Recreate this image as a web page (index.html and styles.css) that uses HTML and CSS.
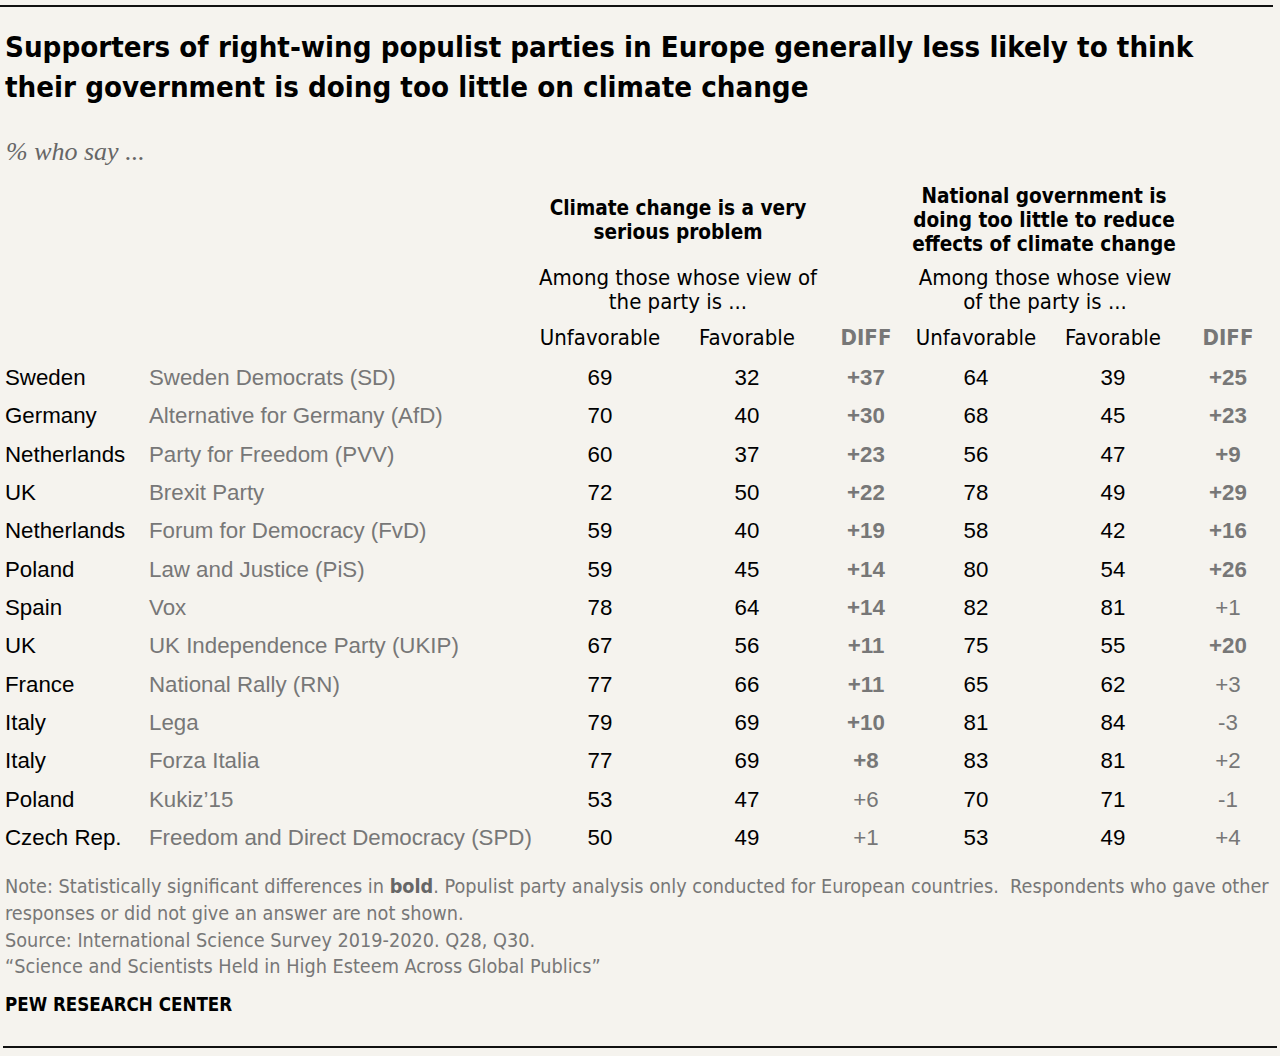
FILE: index.html
```html
<!DOCTYPE html>
<html lang="en">
<head>
<meta charset="utf-8">
<title>Supporters of right-wing populist parties</title>
<link rel="stylesheet" href="styles.css">
</head>
<body>
<div class="page">
  <div class="rule-top"></div>
  <h1 class="title">Supporters of right-wing populist parties in Europe generally less likely to think<br>their government is doing too little on climate change</h1>
  <p class="subtitle">% who say ...</p>

  <div class="thead">
    <div class="group g1">Climate change is a very<br>serious problem</div>
    <div class="group g2">National government is<br>doing too little to reduce<br>effects of climate change</div>

    <div class="among a1">Among those whose view of<br>the party is ...</div>
    <div class="among a2">Among those whose view<br>of the party is ...</div>

    <div class="colhead c3">Unfavorable</div>
    <div class="colhead c4">Favorable</div>
    <div class="colhead c5 diffhead">DIFF</div>
    <div class="colhead c6">Unfavorable</div>
    <div class="colhead c7">Favorable</div>
    <div class="colhead c8 diffhead">DIFF</div>
  </div>

  <div class="tbody">
    <div class="country">Sweden</div><div class="party">Sweden Democrats (SD)</div><div class="num">69</div><div class="num">32</div><div class="diff sig">+37</div><div class="num">64</div><div class="num">39</div><div class="diff sig">+25</div>
    <div class="country">Germany</div><div class="party">Alternative for Germany (AfD)</div><div class="num">70</div><div class="num">40</div><div class="diff sig">+30</div><div class="num">68</div><div class="num">45</div><div class="diff sig">+23</div>
    <div class="country">Netherlands</div><div class="party">Party for Freedom (PVV)</div><div class="num">60</div><div class="num">37</div><div class="diff sig">+23</div><div class="num">56</div><div class="num">47</div><div class="diff sig">+9</div>
    <div class="country">UK</div><div class="party">Brexit Party</div><div class="num">72</div><div class="num">50</div><div class="diff sig">+22</div><div class="num">78</div><div class="num">49</div><div class="diff sig">+29</div>
    <div class="country">Netherlands</div><div class="party">Forum for Democracy (FvD)</div><div class="num">59</div><div class="num">40</div><div class="diff sig">+19</div><div class="num">58</div><div class="num">42</div><div class="diff sig">+16</div>
    <div class="country">Poland</div><div class="party">Law and Justice (PiS)</div><div class="num">59</div><div class="num">45</div><div class="diff sig">+14</div><div class="num">80</div><div class="num">54</div><div class="diff sig">+26</div>
    <div class="country">Spain</div><div class="party">Vox</div><div class="num">78</div><div class="num">64</div><div class="diff sig">+14</div><div class="num">82</div><div class="num">81</div><div class="diff">+1</div>
    <div class="country">UK</div><div class="party">UK Independence Party (UKIP)</div><div class="num">67</div><div class="num">56</div><div class="diff sig">+11</div><div class="num">75</div><div class="num">55</div><div class="diff sig">+20</div>
    <div class="country">France</div><div class="party">National Rally (RN)</div><div class="num">77</div><div class="num">66</div><div class="diff sig">+11</div><div class="num">65</div><div class="num">62</div><div class="diff">+3</div>
    <div class="country">Italy</div><div class="party">Lega</div><div class="num">79</div><div class="num">69</div><div class="diff sig">+10</div><div class="num">81</div><div class="num">84</div><div class="diff">-3</div>
    <div class="country">Italy</div><div class="party">Forza Italia</div><div class="num">77</div><div class="num">69</div><div class="diff sig">+8</div><div class="num">83</div><div class="num">81</div><div class="diff">+2</div>
    <div class="country">Poland</div><div class="party">Kukiz’15</div><div class="num">53</div><div class="num">47</div><div class="diff">+6</div><div class="num">70</div><div class="num">71</div><div class="diff">-1</div>
    <div class="country">Czech Rep.</div><div class="party">Freedom and Direct Democracy (SPD)</div><div class="num">50</div><div class="num">49</div><div class="diff">+1</div><div class="num">53</div><div class="num">49</div><div class="diff">+4</div>
  </div>

  <div class="notes">
    <p>Note: Statistically significant differences in <b>bold</b>. Populist party analysis only conducted for European countries.&nbsp; Respondents who gave other responses or did not give an answer are not shown.</p>
    <p>Source: International Science Survey 2019-2020. Q28, Q30.</p>
    <p>“Science and Scientists Held in High Esteem Across Global Publics”</p>
  </div>
  <div class="brand">PEW RESEARCH CENTER</div>
  <div class="rule-bottom"></div>
</div>
</body>
</html>
```

FILE: styles.css
```css
html, body {
  margin: 0;
  padding: 0;
  background: #f5f3ee;
}

.page {
  width: 1280px;
  height: 1056px;
  box-sizing: border-box;
  padding-top: 5px;
  position: relative;
  color: #000;
  font-family: "Liberation Sans", Arial, sans-serif;
}

.rule-top {
  height: 2px;
  background: #111;
  margin-right: 7px;
}

.title {
  margin: 20px 0 0 5px;
  font-family: "Liberation Sans Narrow", "DejaVu Sans Condensed", sans-serif;
  font-weight: 700;
  font-size: 29.2px;
  line-height: 40px;
  color: #000;
  white-space: nowrap;
}

.subtitle {
  margin: 30px 0 0 6px;
  font-family: "Liberation Serif", Georgia, serif;
  font-style: italic;
  font-size: 26px;
  line-height: 30px;
  color: #666;
}

.thead,
.tbody {
  margin-left: 5px;
  display: grid;
  grid-template-columns: 144px 387px 128px 166px 72px 148px 126px 104px;
}

.thead {
  margin-top: 17px;
  grid-template-rows: 72px 58px 36px;
  align-items: center;
}

.tbody {
  margin-top: 9px;
  grid-auto-rows: 38.33px;
  align-items: center;
}

.group, .among, .colhead {
  font-family: "Liberation Sans Narrow", "DejaVu Sans Condensed", sans-serif;
  text-align: center;
  line-height: 24px;
  white-space: nowrap;
}

.group {
  grid-row: 1;
  font-weight: 700;
  font-size: 20.6px;
}

.g1 { grid-column: 3 / 5; padding-right: 10px; }
.g2 { grid-column: 6 / 8; padding-left: 10px; }

.among {
  grid-row: 2;
  font-size: 22px;
  align-self: end;
}
.a1 { grid-column: 3 / 5; padding-right: 10px; }
.a2 { grid-column: 6 / 8; padding-left: 12px; }

.colhead {
  grid-row: 3;
  font-size: 22px;
  align-self: end;
}
.c3 { grid-column: 3; }
.c4 { grid-column: 4; }
.c5 { grid-column: 5; }
.c6 { grid-column: 6; }
.c7 { grid-column: 7; }
.c8 { grid-column: 8; }

.diffhead {
  font-weight: 700;
  color: #777;
}

.country, .party, .num, .diff {
  font-size: 22.3px;
  line-height: 38px;
  white-space: nowrap;
}

.party { color: #777; }

.num, .diff { text-align: center; }

.diff { color: #777; }
.diff.sig { font-weight: 700; }

.notes {
  margin: 17px 0 0 5px;
  font-family: "Liberation Sans Narrow", "DejaVu Sans Condensed", sans-serif;
  font-size: 19.7px;
  line-height: 26.7px;
  color: #777;
}
.notes p { margin: 0; }
.notes b { color: #666; }

.brand {
  margin: 11px 0 0 5px;
  font-family: "Liberation Sans Narrow", "DejaVu Sans Condensed", sans-serif;
  font-weight: 700;
  font-size: 18.6px;
  line-height: 26px;
  color: #000;
}

.rule-bottom {
  position: absolute;
  left: 3px;
  right: 3px;
  top: 1046px;
  height: 2px;
  background: #111;
}
```
